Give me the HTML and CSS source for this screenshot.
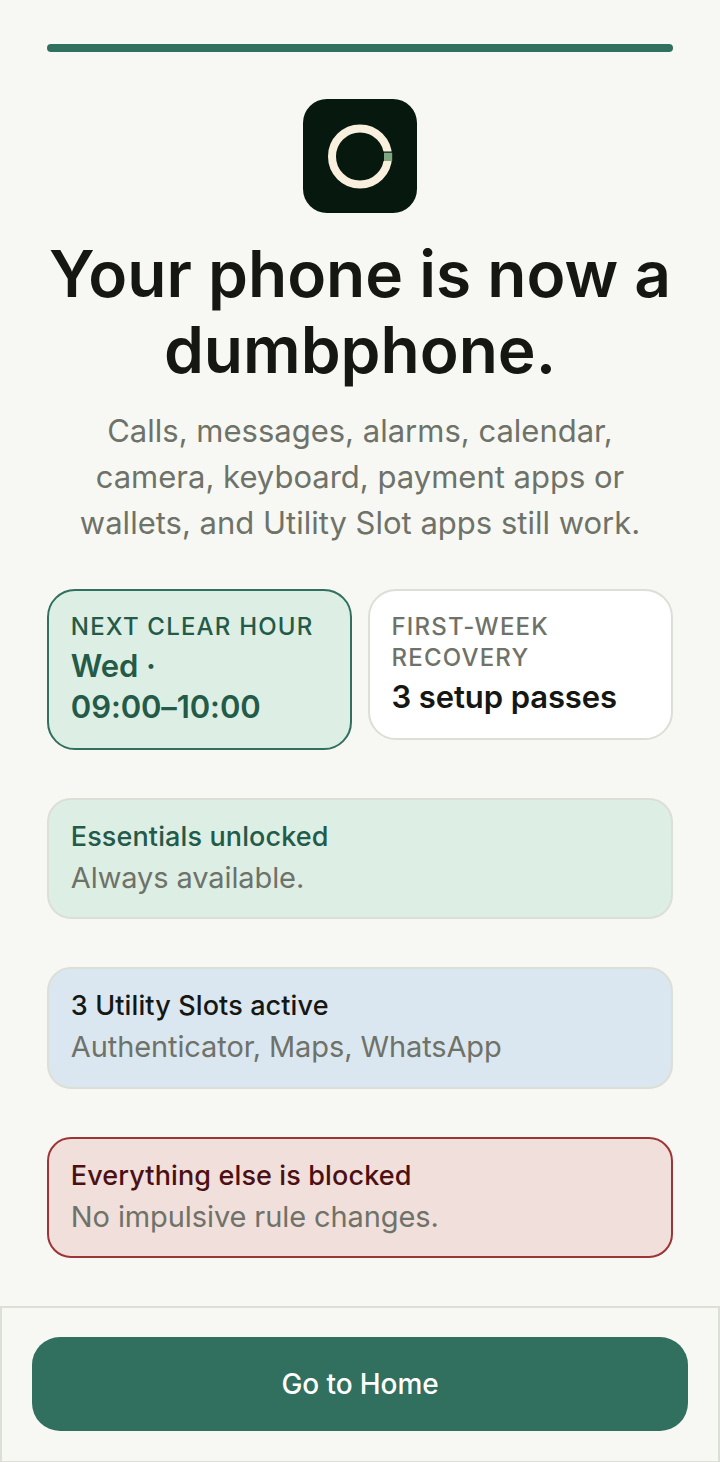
FILE: index.html
```html
<!DOCTYPE html>
<html lang="en">
<head>
<meta charset="utf-8">
<title>Your phone is now a dumbphone</title>
<link rel="stylesheet" href="styles.css">
</head>
<body>
<main class="content">
  <div class="progress"></div>
  <div class="logo">
    <svg viewBox="0 0 114 114" width="114" height="114" aria-hidden="true">
      <rect width="114" height="114" rx="24" fill="#07190f"/>
      <circle cx="57" cy="57.5" r="28" fill="none" stroke="#f8f0dd" stroke-width="8"/>
      <rect x="80" y="52.5" width="10" height="9.5" fill="#07190f"/>
      <rect x="81" y="53.7" width="8.2" height="8.3" fill="#7fa67f"/>
    </svg>
  </div>
  <h1 class="title">Your phone is now a dumbphone.</h1>
  <p class="subtitle">Calls, messages, alarms, calendar, camera, keyboard, payment apps or wallets, and Utility Slot apps still work.</p>
  <section class="stats">
    <div class="stat stat-green">
      <div class="stat-label">NEXT CLEAR HOUR</div>
      <div class="stat-value">Wed · <span class="nowrap">09:00–10:00</span></div>
    </div>
    <div class="stat stat-white">
      <div class="stat-label">FIRST-WEEK RECOVERY</div>
      <div class="stat-value">3 setup passes</div>
    </div>
  </section>
  <section class="rows">
    <div class="row row-green">
      <div class="row-title">Essentials unlocked</div>
      <div class="row-sub">Always available.</div>
    </div>
    <div class="row row-blue">
      <div class="row-title">3 Utility Slots active</div>
      <div class="row-sub">Authenticator, Maps, WhatsApp</div>
    </div>
    <div class="row row-red">
      <div class="row-title">Everything else is blocked</div>
      <div class="row-sub">No impulsive rule changes.</div>
    </div>
  </section>
</main>
<footer class="footer">
  <button class="cta" type="button">Go to Home</button>
</footer>
</body>
</html>
```
FILE: styles.css
```css
* { box-sizing: border-box; }
html, body { margin: 0; padding: 0; }
body {
  width: 720px;
  height: 1462px;
  background: #f7f8f3;
  font-family: "Inter", "Noto Sans", sans-serif;
  color: #151712;
  display: flex;
  flex-direction: column;
  overflow: hidden;
}
.content {
  flex: 1;
  padding: 44px 47.3px 0;
  display: flex;
  flex-direction: column;
}
.progress { height: 8px; border-radius: 4px; background: #316f5e; }
.logo { margin: 47.3px auto 0; width: 114px; height: 114px; }
.logo svg { display: block; }
.title {
  margin: 23px -8px 0;
  font-size: 64px;
  line-height: 76px;
  font-weight: 600;
  text-align: center;
}
.subtitle {
  margin: 20.2px 16px 0;
  font-size: 31px;
  line-height: 46px;
  color: #6e7268;
  text-align: center;
}
.stats {
  margin-top: 42.5px;
  display: grid;
  grid-template-columns: 1fr 1fr;
  gap: 16px;
  align-items: start;
}
.stat {
  border: 2px solid #dcdfd6;
  border-radius: 28px;
  padding: 20px 21.5px 20.5px;
}
.stat-green { background: #ddeee5; border-color: #316f5e; color: #235a48; }
.stat-white { background: #ffffff; }
.stat-label {
  font-size: 24px;
  line-height: 31px;
  font-weight: 500;
  letter-spacing: 1.2px;
}
.stat-white .stat-label { color: #6e7268; }
.stat-value {
  margin-top: 3.5px;
  font-size: 31px;
  line-height: 41px;
  font-weight: 600;
  letter-spacing: -0.1px;
}
.nowrap { white-space: nowrap; }
.rows {
  margin-top: 47.8px;
  display: flex;
  flex-direction: column;
  gap: 48px;
}
.row {
  height: 121.5px;
  border: 2px solid #dcdfd6;
  border-radius: 24px;
  padding: 16px 21.5px;
}
.row-green { background: #ddeee5; }
.row-blue { background: #dbe7f0; }
.row-red { background: #f1dfdb; border-color: #9c3535; }
.row-title { font-size: 27px; line-height: 41px; font-weight: 500; letter-spacing: 0.12px; }
.row-green .row-title { color: #235a48; }
.row-red .row-title { color: #4c0f12; }
.row-sub { font-size: 29px; line-height: 41px; color: #6e7268; letter-spacing: -0.1px; }
.footer {
  height: 156px;
  border: 2px solid #dcdfd6;
  border-bottom-width: 1px;
  padding: 29px 30px 0;
}
.cta {
  display: block;
  width: 100%;
  height: 94px;
  border: 0;
  border-radius: 28px;
  background: #316f5e;
  color: #fff;
  font: 500 28px "Inter", "Noto Sans", sans-serif;
  letter-spacing: -0.1px;
  padding-bottom: 2px;
}
```
